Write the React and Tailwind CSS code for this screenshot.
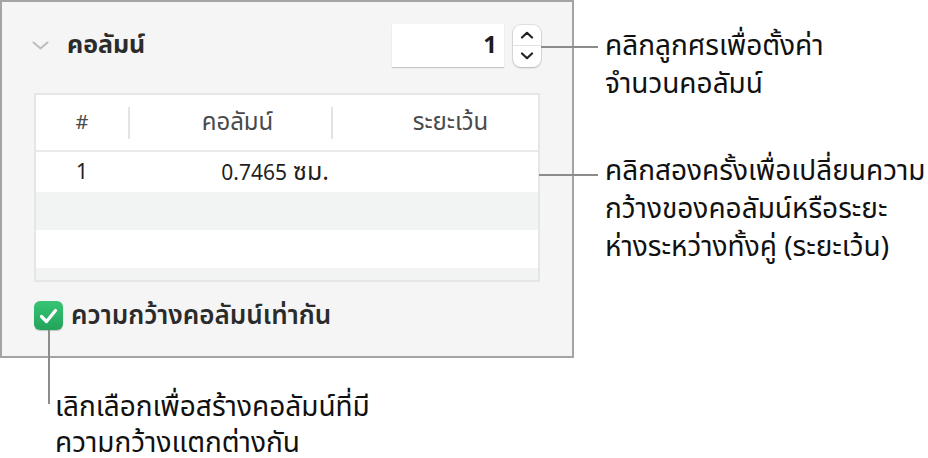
import React from "react";

const rows = [
  { n: "1", width: "0.7465", unit: "ซม." },
  { n: "", width: "", unit: "" },
  { n: "", width: "", unit: "" },
];

export default function App() {
  return (
    <div className="relative h-[458px] w-[928px] overflow-hidden bg-white font-['Noto_Sans_Thai','Noto_Sans',sans-serif] text-[#1d1d1f]">
      <div className="flex">
        <section className="h-[358px] w-[574px] shrink-0 border-2 border-[#a4a4a4] bg-[#f5f5f5]">
          <div className="mt-[22px] flex h-[43px] items-center pl-[30px] pr-[31px]">
            <svg width="17" height="9" viewBox="0 0 17 9" className="mr-[18px]">
              <path d="M1.5 1.5 L8.5 7.5 L15.5 1.5" fill="none" stroke="#bdbdbd" strokeWidth="2" strokeLinecap="round" strokeLinejoin="round" />
            </svg>
            <h2 className="text-[25px] font-bold leading-none text-[#2b2b2b]">คอลัมน์</h2>
            <div className="ml-auto flex items-center gap-[9px]">
              <div className="flex h-[43px] w-[112px] items-center justify-end bg-white pr-[7px] shadow-[0_1px_1px_rgba(0,0,0,0.18)]">
                <span className="text-[24px] font-bold leading-none text-[#1d1d1d]">1</span>
              </div>
              <Stepper />
            </div>
          </div>

          <div className="ml-[32px] mt-[26px] w-[506px] border-2 border-[#e5e6e6] bg-white">
            <div className="flex h-[57px] items-center border-b-2 border-[#e8e9e9] text-[24px] leading-none text-[#4a4a4a]">
              <div className="flex w-[92px] justify-center text-[20px]">#</div>
              <div className="h-[32px] w-[2px] bg-[#e3e3e3]" />
              <div className="flex w-[201px] justify-center pl-[14px]">คอลัมน์</div>
              <div className="h-[32px] w-[2px] bg-[#e3e3e3]" />
              <div className="flex flex-1 justify-center pl-[30px]">ระยะเว้น</div>
            </div>
            {rows.map((r, i) => (
              <div key={i} className={`flex items-center leading-none text-[#1f1f1f] ${i === 1 ? "h-[38px] bg-[#f2f3f3]" : i === 0 ? "h-[40px] bg-white" : "h-[38px] bg-white"}`}>
                <div className="flex w-[92px] justify-center text-[21px]">{r.n}</div>
                <div className="flex w-[203px] items-baseline justify-end gap-[6px] pr-[2px]">
                  <span className="text-[21px]">{r.width}</span>
                  <span className="text-[25px]">{r.unit}</span>
                </div>
                <div className="flex-1" />
              </div>
            ))}
            <div className="h-[12px] bg-[#f2f3f3]" />
          </div>

          <label className="ml-[32px] mt-[19px] flex items-center gap-[8px]">
            <span className="flex h-[29px] w-[29px] items-center justify-center rounded-[6px] bg-gradient-to-b from-[#38c474] to-[#22a45b] shadow-[0_1px_1px_rgba(0,0,0,0.2)]">
              <svg width="19" height="16" viewBox="0 0 19 16">
                <path d="M2.5 8.5 L7.5 13.5 L16.5 2.5" fill="none" stroke="white" strokeWidth="3.2" strokeLinecap="round" strokeLinejoin="round" />
              </svg>
            </span>
            <span className="text-[26px] font-semibold leading-none text-[#2b2b2b]">ความกว้างคอลัมน์เท่ากัน</span>
          </label>
        </section>

        <div className="pl-[31px] text-[28px] text-[#111]">
          <p className="mt-[28px] leading-[38px]">
            คลิกลูกศรเพื่อตั้งค่า
            <br />
            จำนวนคอลัมน์
          </p>
          <p className="mt-[49px] leading-[38px]">
            คลิกสองครั้งเพื่อเปลี่ยนความ
            <br />
            กว้างของคอลัมน์หรือระยะ
            <br />
            ห่างระหว่างทั้งคู่ (ระยะเว้น)
          </p>
        </div>
      </div>

      <p className="mt-[32px] pl-[55px] text-[28px] leading-[36px] text-[#111]">
        เลิกเลือกเพื่อสร้างคอลัมน์ที่มี
        <br />
        ความกว้างแตกต่างกัน
      </p>

      {/* callout leader lines */}
      <div className="absolute left-[541px] top-[46px] h-[2px] w-[57px] bg-[#8c8c8c]" />
      <div className="absolute left-[539px] top-[174px] h-[2px] w-[59px] bg-[#8c8c8c]" />
      <div className="absolute left-[48px] top-[330px] h-[74px] w-[2px] bg-[#8c8c8c]" />
    </div>
  );
}

function Stepper() {
  return (
    <div className="flex h-[42px] w-[28px] flex-col overflow-hidden rounded-[8px] bg-white shadow-[0_0_0_1px_rgba(0,0,0,0.08),0_1px_2px_rgba(0,0,0,0.2)]">
      <div className="flex flex-1 items-center justify-center border-b border-[#e2e2e2]">
        <svg width="14" height="8" viewBox="0 0 14 8">
          <path d="M2 6.5 L7 1.8 L12 6.5" fill="none" stroke="#222" strokeWidth="2.2" strokeLinecap="round" strokeLinejoin="round" />
        </svg>
      </div>
      <div className="flex flex-1 items-center justify-center">
        <svg width="14" height="8" viewBox="0 0 14 8">
          <path d="M2 1.5 L7 6.2 L12 1.5" fill="none" stroke="#222" strokeWidth="2.2" strokeLinecap="round" strokeLinejoin="round" />
        </svg>
      </div>
    </div>
  );
}
